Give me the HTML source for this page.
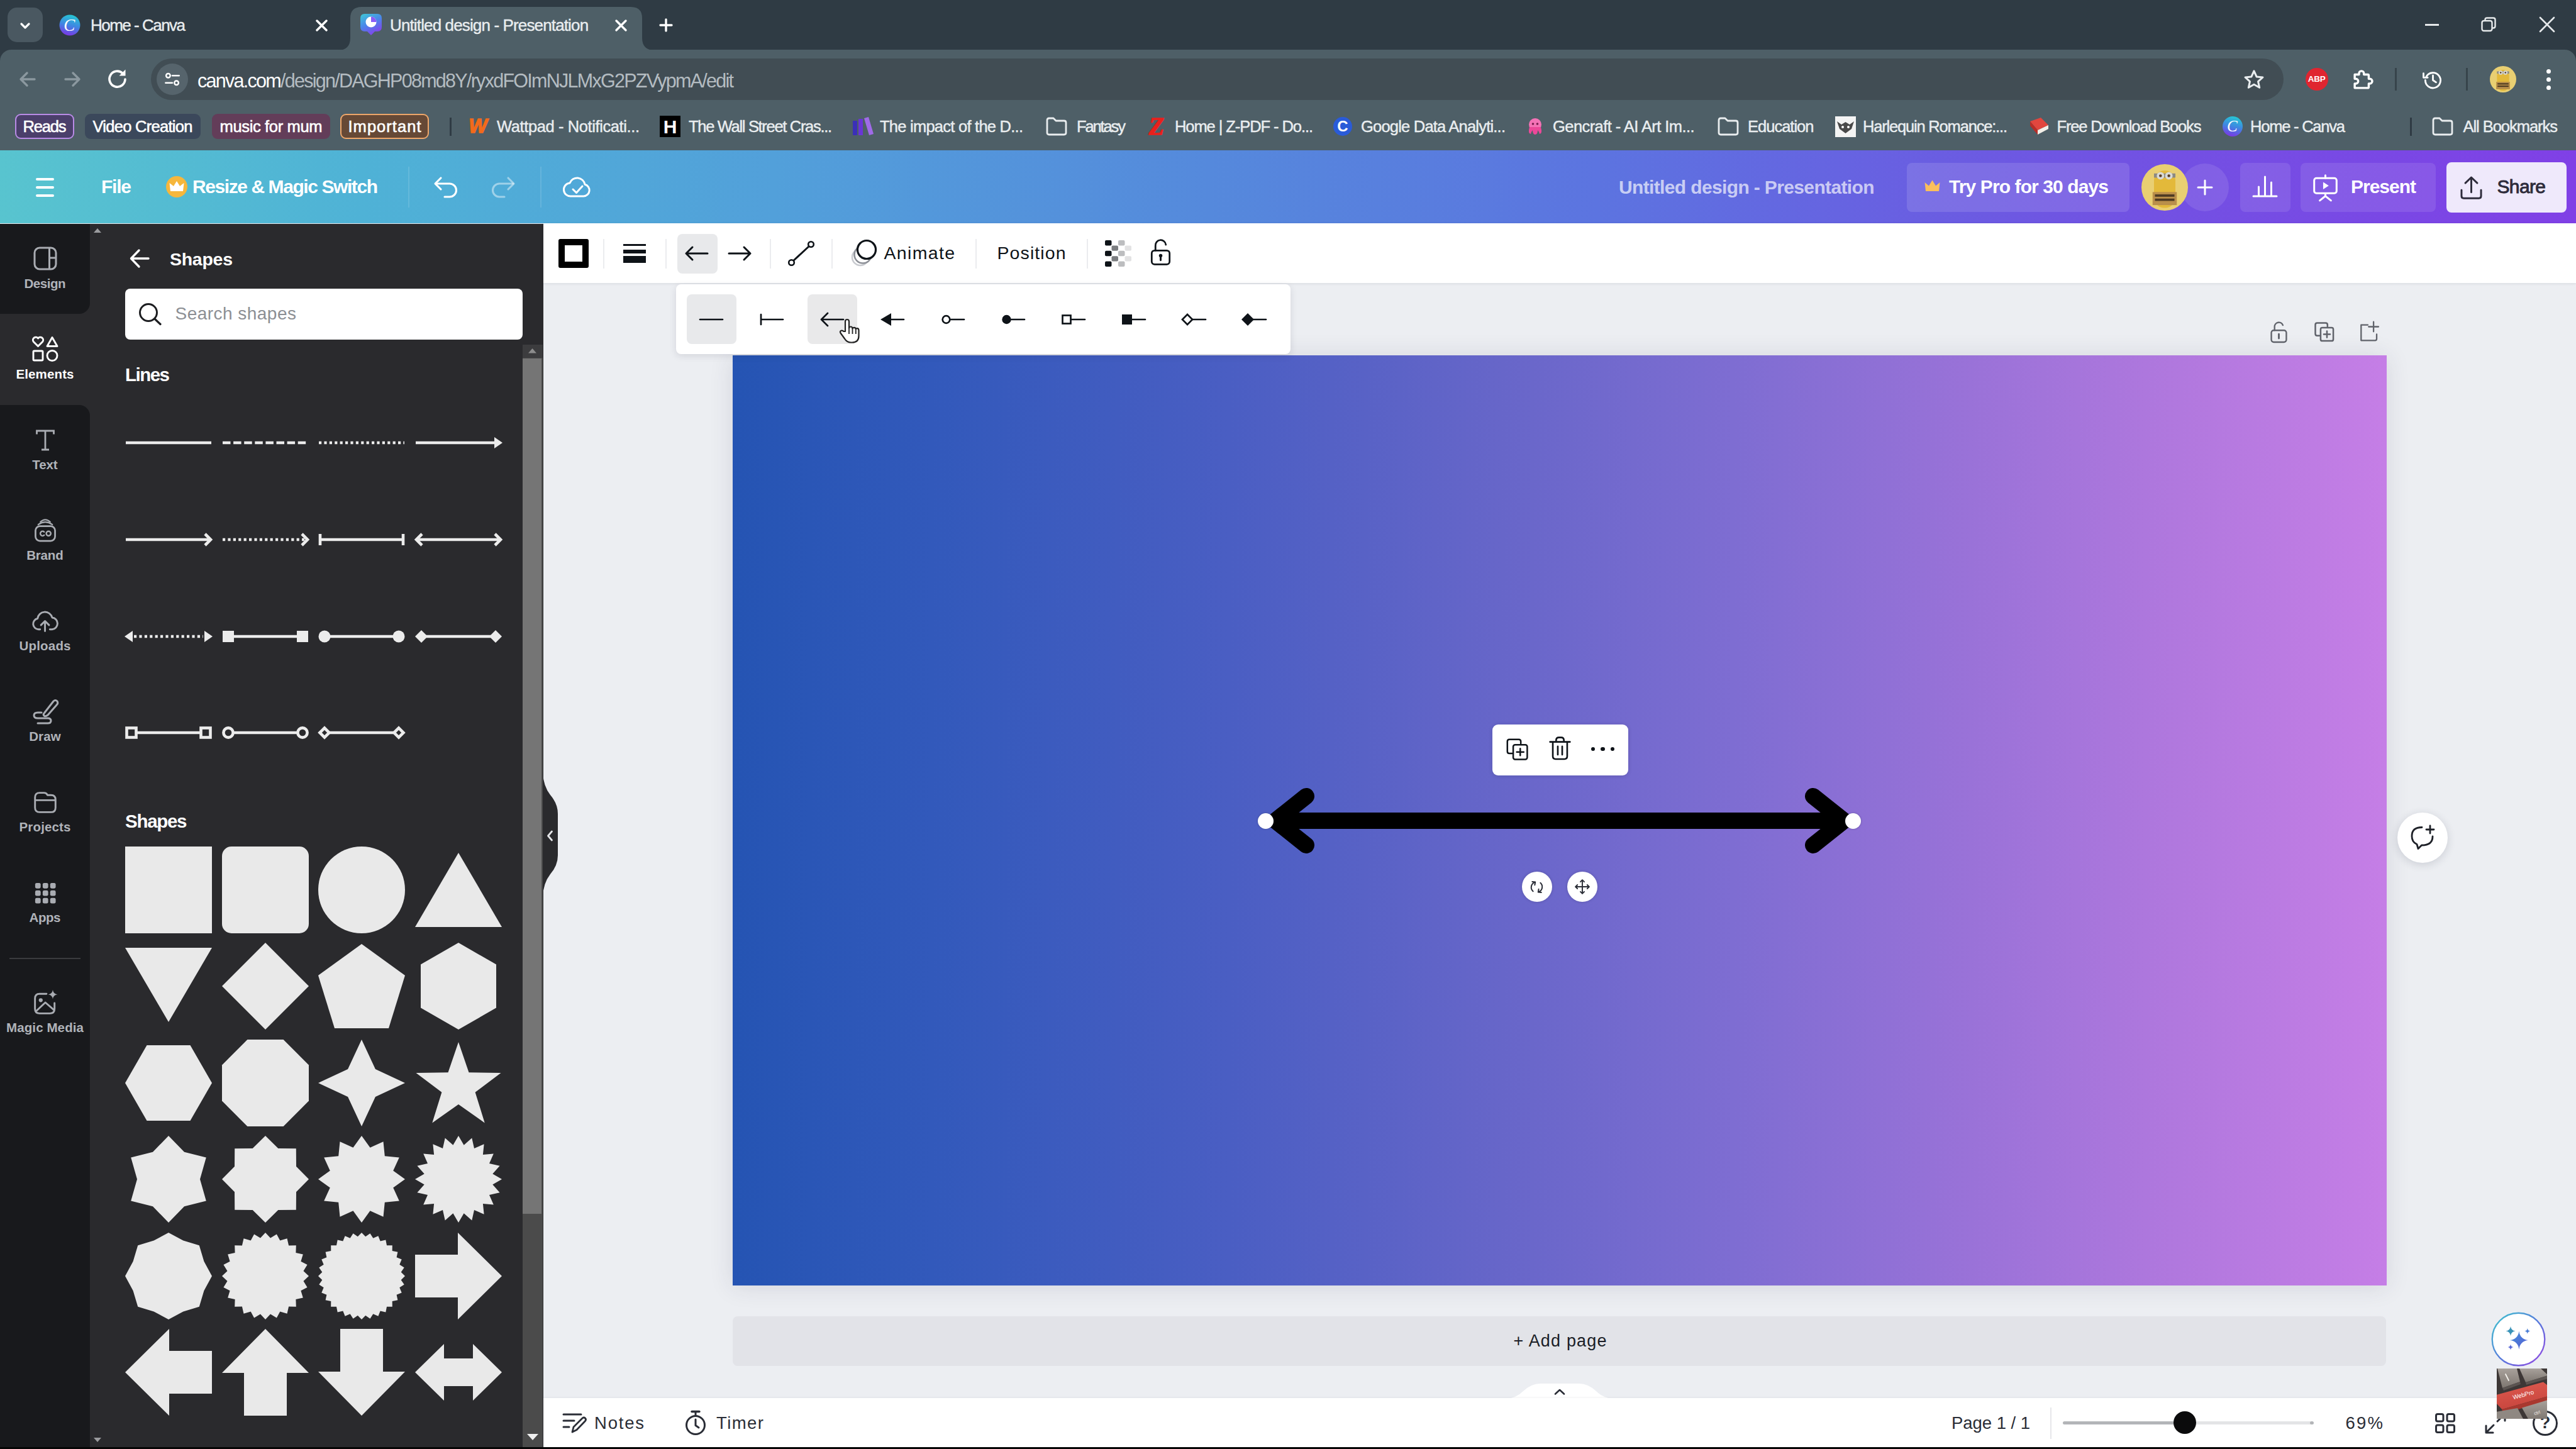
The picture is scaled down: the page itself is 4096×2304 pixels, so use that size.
<!DOCTYPE html>
<html lang="en"><head><meta charset="utf-8"><title>Untitled design - Presentation</title>
<style>
html,body{margin:0;padding:0;}
body{width:4096px;height:2304px;overflow:hidden;position:relative;background:#eceef2;font-family:"Liberation Sans",sans-serif;}
.b{position:absolute;display:block;box-sizing:border-box;}
.t{position:absolute;white-space:nowrap;}
svg{overflow:visible;}
</style></head>
<body>
<div class="b" style="left:0px;top:0px;width:4096px;height:110px;background:#2f3b44;"></div>
<div class="b" style="left:0px;top:78.5px;width:4096px;height:161.5px;background:#4e5f67;border-radius:18px 18px 0 0;"></div>
<div class="b" style="left:12px;top:12px;width:56px;height:55px;background:#4a5861;border-radius:15px;"></div>
<svg class="b" style="left:28.0px;top:29.0px;" width="24" height="24" viewBox="0 0 24 24"><path d="M6 9l6 6 6-6" fill="none" stroke="#fff" stroke-width="3.2" stroke-linecap="round" stroke-linejoin="round"/></svg>
<svg class="b" style="left:94px;top:23px;" width="34" height="34" viewBox="0 0 34 34"><defs><linearGradient id="cg" x1="0.35" y1="1" x2="0.6" y2="0"><stop offset="0" stop-color="#7d35e6"/><stop offset=".5" stop-color="#3f86e2"/><stop offset="1" stop-color="#25c8d4"/></linearGradient></defs><circle cx="17" cy="17" r="16.5" fill="url(#cg)"/></svg>
<div class="t " style="left:101.2px;top:23.8px;font-size:27px;line-height:32.4px;color:#fff;font-family:'Liberation Serif',serif;font-style:italic;">C</div>
<div class="t " style="left:144.0px;top:24.9px;font-size:26px;line-height:31.2px;color:#e9edef;letter-spacing:-1.507px;-webkit-text-stroke:0.4px #e9edef;">Home - Canva</div>
<svg class="b" style="left:503.5px;top:32.5px;" width="15.0" height="15.0" viewBox="0 0 15.0 15.0"><path d="M0 0L15.0 15.0M15.0 0L0 15.0" stroke="#fff" stroke-width="3.4" stroke-linecap="round"/></svg>
<svg class="b" style="left:537px;top:11px" width="504" height="69" viewBox="0 0 504 69"><path d="M0 69 Q20 69 20 49 V18 Q20 0 38 0 H466 Q484 0 484 18 V49 Q484 69 504 69 Z" fill="#4e5f67"/></svg>
<svg class="b" style="left:572px;top:21px;" width="36" height="36" viewBox="0 0 36 36"><defs><linearGradient id="pg" x1="0.2" y1="0" x2="0.7" y2="1"><stop offset="0" stop-color="#3fc0d8"/><stop offset=".45" stop-color="#4a86ea"/><stop offset="1" stop-color="#8a3cec"/></linearGradient></defs><path d="M8 1H28Q35 1 35 8V22Q35 29 28 29H24L18 35L12 29H8Q1 29 1 22V8Q1 1 8 1Z" fill="url(#pg)"/><circle cx="18" cy="14" r="8.5" fill="#fff"/><path d="M18 14V5.5A8.5 8.5 0 0 1 26.5 14Z" fill="#8b5cf6"/></svg>
<div class="t " style="left:620.0px;top:24.9px;font-size:26px;line-height:31.2px;color:#e9edef;letter-spacing:-0.862px;-webkit-text-stroke:0.4px #e9edef;">Untitled design - Presentation</div>
<svg class="b" style="left:979.5px;top:32.5px;" width="15.0" height="15.0" viewBox="0 0 15.0 15.0"><path d="M0 0L15.0 15.0M15.0 0L0 15.0" stroke="#fff" stroke-width="3.4" stroke-linecap="round"/></svg>
<svg class="b" style="left:1049px;top:30px;" width="20" height="20" viewBox="0 0 20 20"><path d="M10 1V19M1 10H19" stroke="#fff" stroke-width="3.4" stroke-linecap="round"/></svg>
<div class="b" style="left:3856px;top:38px;width:22px;height:2.5px;background:#e6e9eb;"></div>
<svg class="b" style="left:3945px;top:27px;" width="24" height="24" viewBox="0 0 24 24"><rect x="1.5" y="6" width="16" height="16" rx="3" fill="none" stroke="#e6e9eb" stroke-width="2.4"/><path d="M6.5 6V4.5Q6.5 1.5 9.5 1.5H19.5Q22.5 1.5 22.5 4.5V14.5Q22.5 17.5 19.5 17.5H17.5" fill="none" stroke="#e6e9eb" stroke-width="2.4"/></svg>
<svg class="b" style="left:4039px;top:28px;" width="22" height="22" viewBox="0 0 22 22"><path d="M0 0L22 22M22 0L0 22" stroke="#e6e9eb" stroke-width="2.6" stroke-linecap="round"/></svg>
<svg class="b" style="left:28px;top:110px;" width="32" height="32" viewBox="0 0 32 32"><g transform="translate(16 16) scale(1 1)"><path d="M11 0H-10M-1 -10L-11 0L-1 10" fill="none" stroke="#8b989f" stroke-width="3.4" stroke-linecap="round" stroke-linejoin="round"/></g></svg>
<svg class="b" style="left:99px;top:110px;" width="32" height="32" viewBox="0 0 32 32"><g transform="translate(16 16) scale(-1 1)"><path d="M11 0H-10M-1 -10L-11 0L-1 10" fill="none" stroke="#8b989f" stroke-width="3.4" stroke-linecap="round" stroke-linejoin="round"/></g></svg>
<svg class="b" style="left:166px;top:105px;" width="42" height="42" viewBox="0 0 42 42"><path d="M33 21A12.5 12.5 0 1 1 29 11.5" fill="none" stroke="#fff" stroke-width="3.6" stroke-linecap="round"/><path d="M33.5 5.5V15.5H23.5Z" fill="#fff"/></svg>
<div class="b" style="left:240px;top:93px;width:3391px;height:66px;background:#414d54;border-radius:33px;"></div>
<div class="b" style="left:249px;top:101px;width:50px;height:50px;background:#56646c;border-radius:25px;"></div>
<svg class="b" style="left:260px;top:112px;" width="28" height="28" viewBox="0 0 34 34"><circle cx="9" cy="10" r="4" fill="none" stroke="#fff" stroke-width="3"/><path d="M17 10H30" stroke="#fff" stroke-width="3" stroke-linecap="round"/><circle cx="25" cy="24" r="4" fill="none" stroke="#fff" stroke-width="3"/><path d="M4 24H17" stroke="#fff" stroke-width="3" stroke-linecap="round"/></svg>
<div class="t" style="left:314px;top:109.7px;font-size:30.5px;line-height:36.6px;letter-spacing:-1.730px;color:#b4bcc1"><span style="color:#fff">canva.com</span>/design/DAGHP08md8Y/ryxdFOImNJLMxG2PZVypmA/edit</div>
<svg class="b" style="left:3567px;top:109px;" width="34" height="34" viewBox="0 0 40 40"><path d="M20 4.5L24.8 15.2L36.4 16.4L27.7 24.2L30.2 35.6L20 29.7L9.8 35.6L12.3 24.2L3.6 16.4L15.2 15.2Z" fill="none" stroke="#e9edef" stroke-width="3.6" stroke-linejoin="round"/></svg>
<div class="b" style="left:3666px;top:108px;width:36px;height:36px;background:#e02530;border-radius:18px;"></div>
<div class="t " style="left:3669.8px;top:118.4px;font-size:13.5px;line-height:16.2px;color:#fff;font-weight:700;letter-spacing:-0.3px;">ABP</div>
<svg class="b" style="left:3739px;top:109px;" width="36" height="36" viewBox="0 0 42 42"><path d="M6 11H14V9A4.5 4.5 0 0 1 23 9V11H30Q32 11 32 13V19H34A4.5 4.5 0 0 1 34 28H32V34Q32 36 30 36H6V28H8A4.5 4.5 0 0 0 8 19H6Z" fill="none" stroke="#fff" stroke-width="4" stroke-linejoin="round"/></svg>
<div class="b" style="left:3808px;top:108px;width:3px;height:36px;background:#37444b;"></div>
<svg class="b" style="left:3851px;top:109.5px;" width="35" height="35" viewBox="0 0 42 42"><path d="M8.5 14A14.5 14.5 0 1 1 6.5 21" fill="none" stroke="#fff" stroke-width="3.4" stroke-linecap="round"/><path d="M3 8V16H11" fill="none" stroke="#fff" stroke-width="3.4" stroke-linecap="round" stroke-linejoin="round"/><path d="M21 12V21L27 25" fill="none" stroke="#fff" stroke-width="3.4" stroke-linecap="round" stroke-linejoin="round"/></svg>
<div class="b" style="left:3920.5px;top:108px;width:3.0px;height:36px;background:#37444b;"></div>
<svg class="b" style="left:3958.5px;top:105px;" width="42" height="42" viewBox="0 0 100 100"><defs><clipPath id="av1"><circle cx="50" cy="50" r="50"/></clipPath></defs><g clip-path="url(#av1)"><rect width="100" height="100" fill="#e9cf72"/><rect x="27" y="14" width="46" height="80" rx="22" fill="#e3b93a"/><rect x="27" y="20" width="46" height="9" fill="#8c8a83"/><circle cx="41" cy="25" r="8" fill="#d9d9d4"/><circle cx="59" cy="25" r="8" fill="#d9d9d4"/><circle cx="41" cy="25" r="3" fill="#5a3d22"/><circle cx="59" cy="25" r="3" fill="#5a3d22"/><rect x="24" y="60" width="52" height="28" fill="#b98f4a"/><rect x="29" y="65" width="42" height="5" fill="#4d3a22"/><rect x="29" y="74" width="42" height="5" fill="#4d3a22"/></g></svg>
<div class="b" style="left:4048.5px;top:109.5px;width:7.0px;height:7.0px;background:#fff;border-radius:4px;"></div>
<div class="b" style="left:4048.5px;top:122.5px;width:7.0px;height:7.0px;background:#fff;border-radius:4px;"></div>
<div class="b" style="left:4048.5px;top:135.5px;width:7.0px;height:7.0px;background:#fff;border-radius:4px;"></div>
<div class="b" style="left:24px;top:181px;width:94px;height:40px;background:#4b3f6b;border-radius:9px;border:2.5px solid #b98be6;"></div>
<div class="t " style="left:36.5px;top:186.2px;font-size:25.5px;line-height:30.6px;color:#fff;letter-spacing:-1.184px;-webkit-text-stroke:0.6px #fff;">Reads</div>
<div class="b" style="left:135px;top:181px;width:184px;height:40px;background:#3b485b;border-radius:9px;"></div>
<div class="t " style="left:147.5px;top:186.2px;font-size:25.5px;line-height:30.6px;color:#fff;letter-spacing:-0.714px;-webkit-text-stroke:0.6px #fff;">Video Creation</div>
<div class="b" style="left:337px;top:181px;width:188px;height:40px;background:#633d59;border-radius:9px;"></div>
<div class="t " style="left:349.5px;top:186.2px;font-size:25.5px;line-height:30.6px;color:#fff;letter-spacing:-0.346px;-webkit-text-stroke:0.6px #fff;">music for mum</div>
<div class="b" style="left:541px;top:181px;width:141px;height:40px;background:#664936;border-radius:9px;border:2.5px solid #eda66a;"></div>
<div class="t " style="left:553.5px;top:186.2px;font-size:25.5px;line-height:30.6px;color:#fff;letter-spacing:1.037px;-webkit-text-stroke:0.6px #fff;">Important</div>
<div class="b" style="left:714.5px;top:187px;width:3.0px;height:29px;background:#2f3b44;"></div>
<div class="t " style="left:745.4px;top:182.4px;font-size:31px;line-height:37.2px;color:#f26a1b;font-weight:700;font-style:italic;-webkit-text-stroke:1.6px #f26a1b;">W</div>
<div class="t " style="left:790.0px;top:186.2px;font-size:25.5px;line-height:30.6px;color:#e9edef;letter-spacing:-0.395px;-webkit-text-stroke:0.45px #e9edef;">Wattpad - Notificati...</div>
<div class="b" style="left:1049px;top:184px;width:33px;height:34px;background:#000;"></div>
<div class="t " style="left:1054.7px;top:183.5px;font-size:30px;line-height:36.0px;color:#fff;font-weight:700;">H</div>
<div class="t " style="left:1095.0px;top:186.2px;font-size:25.5px;line-height:30.6px;color:#e9edef;letter-spacing:-1.315px;-webkit-text-stroke:0.45px #e9edef;">The Wall Street Cras...</div>
<svg class="b" style="left:1355px;top:186px;" width="34" height="30" viewBox="0 0 34 30"><path d="M1 6H8V29H1Z" fill="#3b2fb8"/><path d="M10 3H17V29H10Z" fill="#6a35d6"/><path d="M19 2L26 0L34 27L27 29Z" fill="#a06be8"/></svg>
<div class="t " style="left:1399.0px;top:186.2px;font-size:25.5px;line-height:30.6px;color:#e9edef;letter-spacing:-0.750px;-webkit-text-stroke:0.45px #e9edef;">The impact of the D...</div>
<svg class="b" style="left:1663px;top:186px;" width="34" height="30" viewBox="0 0 34 30"><path d="M2 5Q2 2 5 2H12L16 6H29Q32 6 32 9V25Q32 28 29 28H5Q2 28 2 25Z" fill="none" stroke="#e9edef" stroke-width="2.8" stroke-linejoin="round"/></svg>
<div class="t " style="left:1712.0px;top:186.2px;font-size:25.5px;line-height:30.6px;color:#e9edef;letter-spacing:-2.120px;-webkit-text-stroke:0.45px #e9edef;">Fantasy</div>
<div class="t " style="left:1826.8px;top:177.0px;font-size:40px;line-height:48.0px;color:#e8201c;font-weight:700;font-style:italic;font-family:'Liberation Serif',serif;-webkit-text-stroke:1.5px #e8201c;">Z</div>
<div class="t " style="left:1868.0px;top:186.2px;font-size:25.5px;line-height:30.6px;color:#e9edef;letter-spacing:-1.072px;-webkit-text-stroke:0.45px #e9edef;">Home | Z-PDF - Do...</div>
<div class="b" style="left:2120px;top:186px;width:30px;height:30px;background:#2a5bd8;border-radius:15px;"></div>
<div class="t " style="left:2126.3px;top:186.6px;font-size:24px;line-height:28.8px;color:#fff;font-weight:700;">C</div>
<div class="t " style="left:2164.0px;top:186.2px;font-size:25.5px;line-height:30.6px;color:#e9edef;letter-spacing:-0.794px;-webkit-text-stroke:0.45px #e9edef;">Google Data Analyti...</div>
<svg class="b" style="left:2426px;top:186px;" width="30" height="30" viewBox="0 0 30 30"><circle cx="15" cy="12" r="10" fill="#f472b6"/><path d="M6 16Q3 27 8 27Q9 23 11 21Q11 28 15 28Q19 28 19 21Q21 23 22 27Q27 27 24 16Z" fill="#ec4899"/><circle cx="11.5" cy="11" r="1.8" fill="#7a1d4e"/><circle cx="18.5" cy="11" r="1.8" fill="#7a1d4e"/></svg>
<div class="t " style="left:2469.0px;top:186.2px;font-size:25.5px;line-height:30.6px;color:#e9edef;letter-spacing:-0.567px;-webkit-text-stroke:0.45px #e9edef;">Gencraft - AI Art Im...</div>
<svg class="b" style="left:2731px;top:186px;" width="34" height="30" viewBox="0 0 34 30"><path d="M2 5Q2 2 5 2H12L16 6H29Q32 6 32 9V25Q32 28 29 28H5Q2 28 2 25Z" fill="none" stroke="#e9edef" stroke-width="2.8" stroke-linejoin="round"/></svg>
<div class="t " style="left:2779.0px;top:186.2px;font-size:25.5px;line-height:30.6px;color:#e9edef;letter-spacing:-0.994px;-webkit-text-stroke:0.45px #e9edef;">Education</div>
<div class="b" style="left:2918px;top:185px;width:33px;height:33px;background:#f4f4f4;"></div>
<svg class="b" style="left:2918px;top:185px;" width="33" height="33" viewBox="0 0 33 33"><path d="M3 8L10 13L16.5 9L23 13L30 8L26 20L16.5 27L7 20Z" fill="#4a4a4a"/><circle cx="12" cy="17" r="2" fill="#fff"/><circle cx="21" cy="17" r="2" fill="#fff"/></svg>
<div class="t " style="left:2962.0px;top:186.2px;font-size:25.5px;line-height:30.6px;color:#e9edef;letter-spacing:-1.187px;-webkit-text-stroke:0.45px #e9edef;">Harlequin Romance:...</div>
<svg class="b" style="left:3225px;top:185px;" width="34" height="34" viewBox="0 0 34 34"><path d="M3 8L20 2L32 14L15 22Z" fill="#e2463e"/><path d="M3 8L15 22V29L3 15Z" fill="#b92d27"/><path d="M15 22L32 14V20L15 29Z" fill="#f3efe8"/></svg>
<div class="t " style="left:3270.5px;top:186.2px;font-size:25.5px;line-height:30.6px;color:#e9edef;letter-spacing:-1.163px;-webkit-text-stroke:0.45px #e9edef;">Free Download Books</div>
<svg class="b" style="left:3534px;top:185px;" width="32" height="32" viewBox="0 0 32 32"><circle cx="16" cy="16" r="16" fill="url(#cg)"/></svg>
<div class="t " style="left:3541.0px;top:186.0px;font-size:25px;line-height:30.0px;color:#fff;font-family:'Liberation Serif',serif;font-style:italic;">C</div>
<div class="t " style="left:3578.0px;top:186.2px;font-size:25.5px;line-height:30.6px;color:#e9edef;letter-spacing:-1.219px;-webkit-text-stroke:0.45px #e9edef;">Home - Canva</div>
<div class="b" style="left:3831.5px;top:187px;width:3.0px;height:29px;background:#2f3b44;"></div>
<svg class="b" style="left:3867px;top:186px;" width="34" height="30" viewBox="0 0 34 30"><path d="M2 5Q2 2 5 2H12L16 6H29Q32 6 32 9V25Q32 28 29 28H5Q2 28 2 25Z" fill="none" stroke="#e9edef" stroke-width="2.8" stroke-linejoin="round"/></svg>
<div class="t " style="left:3916.5px;top:186.2px;font-size:25.5px;line-height:30.6px;color:#e9edef;letter-spacing:-1.040px;-webkit-text-stroke:0.45px #e9edef;">All Bookmarks</div>
<div class="b" style="left:0px;top:238.5px;width:4096px;height:116.69999999999999px;background:linear-gradient(90deg,#58c4cf 0%,#4fb2d6 14%,#52a0da 30%,#5589dc 47%,#5c74e0 62%,#6f55e2 80%,#8040e6 100%);"></div>
<div class="b" style="left:57px;top:283.4px;width:29px;height:3.2000000000000455px;background:#fff;border-radius:2px;"></div>
<div class="b" style="left:57px;top:296.4px;width:29px;height:3.2000000000000455px;background:#fff;border-radius:2px;"></div>
<div class="b" style="left:57px;top:309.4px;width:29px;height:3.2000000000000455px;background:#fff;border-radius:2px;"></div>
<div class="t " style="left:161.0px;top:279.0px;font-size:30px;line-height:36.0px;color:#fff;font-weight:700;letter-spacing:-1.224px;">File</div>
<div class="b" style="left:264px;top:280px;width:34px;height:34px;background:#f6b73c;border-radius:17px;"></div>
<svg class="b" style="left:268px;top:285px;" width="26" height="22" viewBox="0 0 26 22"><path d="M3 19L1.5 6L8 11L13 3L18 11L24.5 6L23 19Z" fill="#fff"/></svg>
<div class="t " style="left:306.0px;top:279.0px;font-size:30px;line-height:36.0px;color:#fff;font-weight:700;letter-spacing:-1.420px;">Resize &amp; Magic Switch</div>
<div class="b" style="left:649px;top:265px;width:2px;height:65px;background:rgba(255,255,255,.12);"></div>
<svg class="b" style="left:687px;top:275px;" width="44" height="44" viewBox="0 0 44 44"><g transform="translate(22 22) scale(1 1)"><path d="M-8 -14L-17 -5L-8 4" fill="none" stroke="#fff" stroke-width="3.1" stroke-linecap="round" stroke-linejoin="round"/><path d="M-16 -5H6A10.5 10.5 0 0 1 6 16H-2" fill="none" stroke="#fff" stroke-width="3.1" stroke-linecap="round"/></g></svg>
<svg class="b" style="left:778px;top:275px;" width="44" height="44" viewBox="0 0 44 44"><g transform="translate(22 22) scale(-1 1)"><path d="M-8 -14L-17 -5L-8 4" fill="none" stroke="rgba(255,255,255,.45)" stroke-width="3.1" stroke-linecap="round" stroke-linejoin="round"/><path d="M-16 -5H6A10.5 10.5 0 0 1 6 16H-2" fill="none" stroke="rgba(255,255,255,.45)" stroke-width="3.1" stroke-linecap="round"/></g></svg>
<div class="b" style="left:859px;top:265px;width:2px;height:65px;background:rgba(255,255,255,.12);"></div>
<svg class="b" style="left:895px;top:274px;" width="46" height="46" viewBox="0 0 46 46"><path d="M13 38H33A9.5 9.5 0 0 0 35 19.3A12.5 12.5 0 0 0 11 17A10.5 10.5 0 0 0 13 38Z" fill="none" stroke="#fff" stroke-width="3" stroke-linejoin="round"/><path d="M16 27L21.5 32.5L31 22" fill="none" stroke="#fff" stroke-width="3" stroke-linecap="round" stroke-linejoin="round"/></svg>
<div class="t " style="left:2574.0px;top:280.0px;font-size:30px;line-height:36.0px;color:rgba(255,255,255,.68);font-weight:700;letter-spacing:-0.638px;">Untitled design - Presentation</div>
<div class="b" style="left:3031.5px;top:258.5px;width:354.0px;height:78.0px;background:rgba(255,255,255,.12);border-radius:8px;"></div>
<svg class="b" style="left:3059px;top:284px;" width="27" height="24" viewBox="0 0 27 24"><path d="M3 20L1.5 6L8 11.5L13.5 2.5L19 11.5L25.5 6L24 20Z" fill="#fbbf5c"/></svg>
<div class="t " style="left:3099.0px;top:279.0px;font-size:30px;line-height:36.0px;color:#fff;font-weight:700;letter-spacing:-0.895px;">Try Pro for 30 days</div>
<div class="b" style="left:3468px;top:260px;width:76px;height:76px;background:rgba(255,255,255,.10);border-radius:38px;"></div>
<svg class="b" style="left:3404.5px;top:260.5px;" width="74" height="74" viewBox="0 0 100 100"><defs><clipPath id="av2"><circle cx="50" cy="50" r="50"/></clipPath></defs><g clip-path="url(#av2)"><rect width="100" height="100" fill="#e9cf72"/><rect x="27" y="14" width="46" height="80" rx="22" fill="#e3b93a"/><rect x="27" y="20" width="46" height="9" fill="#8c8a83"/><circle cx="41" cy="25" r="8" fill="#d9d9d4"/><circle cx="59" cy="25" r="8" fill="#d9d9d4"/><circle cx="41" cy="25" r="3" fill="#5a3d22"/><circle cx="59" cy="25" r="3" fill="#5a3d22"/><rect x="24" y="60" width="52" height="28" fill="#b98f4a"/><rect x="29" y="65" width="42" height="5" fill="#4d3a22"/><rect x="29" y="74" width="42" height="5" fill="#4d3a22"/></g></svg>
<svg class="b" style="left:3493.5px;top:285.5px;" width="24" height="24" viewBox="0 0 24 24"><path d="M12 1V23M1 12H23" stroke="#fff" stroke-width="3" stroke-linecap="round"/></svg>
<div class="b" style="left:3561.5px;top:258.5px;width:80.0px;height:78.0px;background:rgba(255,255,255,.10);border-radius:8px;"></div>
<svg class="b" style="left:3581px;top:279px;" width="41" height="35" viewBox="0 0 41 35"><path d="M2 33H39M10.5 32V18M20.5 32V2M30.5 32V11" fill="none" stroke="#fff" stroke-width="3" stroke-linecap="round"/></svg>
<div class="b" style="left:3658px;top:258.5px;width:215px;height:78.0px;background:rgba(255,255,255,.10);border-radius:8px;"></div>
<svg class="b" style="left:3676.5px;top:277px;" width="41" height="44.5" viewBox="0 0 46 50"><rect x="3" y="7" width="40" height="27" rx="4" fill="none" stroke="#fff" stroke-width="3.4"/><path d="M23 2V7M23 35V39M23 39L13 47M23 39L33 47" fill="none" stroke="#fff" stroke-width="3.4" stroke-linecap="round"/><path d="M19 14L29 20.5L19 27Z" fill="#fff"/></svg>
<div class="t " style="left:3738.0px;top:279.0px;font-size:30px;line-height:36.0px;color:#fff;font-weight:700;letter-spacing:-1.010px;">Present</div>
<div class="b" style="left:3889.5px;top:257.5px;width:191.0px;height:80.0px;background:#efe9fb;border-radius:8px;"></div>
<svg class="b" style="left:3910.5px;top:279px;" width="37" height="38" viewBox="0 0 42 44"><path d="M3 27V38Q3 42 7 42H35Q39 42 39 38V27" fill="none" stroke="#2d2b3a" stroke-width="3.4" stroke-linecap="round"/><path d="M21 31V4M10 14L21 3.5L32 14" fill="none" stroke="#2d2b3a" stroke-width="3.4" stroke-linecap="round" stroke-linejoin="round"/></svg>
<div class="t " style="left:3970.5px;top:279.0px;font-size:30px;line-height:36.0px;color:#2d2b3a;letter-spacing:-0.641px;-webkit-text-stroke:0.9px #2d2b3a;">Share</div>
<div class="b" style="left:0px;top:355.5px;width:864px;height:1945.5px;background:#2a2a2d;"></div>
<div class="b" style="left:0px;top:355.5px;width:143px;height:143.0px;background:#18191c;border-radius:0 0 17px 0;"></div>
<div class="b" style="left:0px;top:643.5px;width:143px;height:1657.5px;background:#18191c;border-radius:0 17px 0 0;"></div>
<svg class="b" style="left:52.5px;top:392px;" width="38" height="38" viewBox="0 0 38 38"><rect x="2" y="2" width="34" height="34" rx="8" fill="none" stroke="#a9acb2" stroke-width="3"/><path d="M25.5 2V36M25.5 18H36" stroke="#a9acb2" stroke-width="3"/></svg>
<div class="t " style="left:38.5px;top:438.7px;font-size:20.5px;line-height:24.6px;color:#b0b3b9;font-weight:700;letter-spacing:-0.469px;">Design</div>
<svg class="b" style="left:50px;top:533px;" width="44" height="44" viewBox="0 0 44 44"><path d="M10.5 17.5L3.2 10.2A4.3 4.3 0 0 1 10.5 5A4.3 4.3 0 0 1 17.8 10.2Z" fill="none" stroke="#fff" stroke-width="2.9" stroke-linejoin="round"/><path d="M33 3.5L41 17.5H25Z" fill="none" stroke="#fff" stroke-width="2.9" stroke-linejoin="round"/><rect x="3" y="25" width="15" height="15" rx="1.5" fill="none" stroke="#fff" stroke-width="2.9"/><circle cx="33" cy="32.5" r="8" fill="none" stroke="#fff" stroke-width="2.9"/></svg>
<div class="t " style="left:25.5px;top:582.7px;font-size:20.5px;line-height:24.6px;color:#fff;font-weight:700;letter-spacing:0.118px;">Elements</div>
<svg class="b" style="left:56px;top:682px;" width="32" height="36" viewBox="0 0 32 36"><path d="M2.5 8.5V3H29.5V8.5M16 3V33M10 33H22" fill="none" stroke="#a9acb2" stroke-width="2.8" stroke-linejoin="miter"/></svg>
<div class="t " style="left:51.2px;top:726.7px;font-size:20.5px;line-height:24.6px;color:#b0b3b9;font-weight:700;letter-spacing:-0.047px;">Text</div>
<svg class="b" style="left:52.5px;top:821.5px;" width="38" height="41.5" viewBox="0 0 44 48"><path d="M13 9Q22 1 31 9" fill="none" stroke="#a9acb2" stroke-width="2.6" stroke-linecap="round"/><path d="M9 14Q22 5 35 14" fill="none" stroke="#a9acb2" stroke-width="2.6" stroke-linecap="round"/><rect x="4" y="17" width="36" height="27" rx="8" fill="none" stroke="#a9acb2" stroke-width="3.2"/><path d="M20 27.5A4.2 4.2 0 1 0 20 33.5" fill="none" stroke="#a9acb2" stroke-width="2.8" stroke-linecap="round"/><circle cx="28" cy="30.5" r="4.2" fill="none" stroke="#a9acb2" stroke-width="2.8"/></svg>
<div class="t " style="left:42.2px;top:870.7px;font-size:20.5px;line-height:24.6px;color:#b0b3b9;font-weight:700;letter-spacing:-0.180px;">Brand</div>
<svg class="b" style="left:50.5px;top:966px;" width="42" height="42" viewBox="0 0 46 46"><path d="M14 38H11A9.5 9.5 0 0 1 9.5 19.2A13 13 0 0 1 35 17.5A10.3 10.3 0 0 1 35 38H31" fill="none" stroke="#a9acb2" stroke-width="3.2" stroke-linecap="round" stroke-linejoin="round"/><path d="M22.5 41V24M15.5 30.5L22.5 23.5L29.5 30.5" fill="none" stroke="#a9acb2" stroke-width="3.2" stroke-linecap="round" stroke-linejoin="round"/><path d="M14 38Q22.5 44 31 38" fill="none" stroke="#a9acb2" stroke-width="0"/></svg>
<div class="t " style="left:30.5px;top:1014.7px;font-size:20.5px;line-height:24.6px;color:#b0b3b9;font-weight:700;letter-spacing:0.190px;">Uploads</div>
<svg class="b" style="left:50px;top:1110px;" width="44" height="44" viewBox="0 0 44 44"><path d="M21 23L35 5Q38 2 41 5Q43 8 40 11L26 27Q22 30 20 28Q18 26 21 23Z" fill="none" stroke="#a9acb2" stroke-width="3" stroke-linejoin="round"/><path d="M16 23H10Q4 23 4 27.5Q4 32 10 32H26Q31 32 31 36Q31 40 26 40H10" fill="none" stroke="#a9acb2" stroke-width="3" stroke-linecap="round"/></svg>
<div class="t " style="left:46.2px;top:1158.7px;font-size:20.5px;line-height:24.6px;color:#b0b3b9;font-weight:700;letter-spacing:0.120px;">Draw</div>
<svg class="b" style="left:53px;top:1256.5px;" width="38" height="38" viewBox="0 0 42 42"><path d="M3 12Q3 4 11 4H19Q23 4 25 8H31Q39 8 39 16V30Q39 38 31 38H11Q3 38 3 30Z" fill="none" stroke="#a9acb2" stroke-width="3.2" stroke-linejoin="round"/><path d="M3 17H39" stroke="#a9acb2" stroke-width="3.2"/></svg>
<div class="t " style="left:30.5px;top:1302.7px;font-size:20.5px;line-height:24.6px;color:#b0b3b9;font-weight:700;letter-spacing:0.154px;">Projects</div>
<svg class="b" style="left:55px;top:1403px;" width="34" height="34" viewBox="0 0 37 37"><rect x="1" y="1" width="9.5" height="9.5" rx="2.6" fill="#a9acb2"/><rect x="14" y="1" width="9.5" height="9.5" rx="2.6" fill="#a9acb2"/><rect x="27" y="1" width="9.5" height="9.5" rx="2.6" fill="#a9acb2"/><rect x="1" y="14" width="9.5" height="9.5" rx="2.6" fill="#a9acb2"/><rect x="14" y="14" width="9.5" height="9.5" rx="2.6" fill="#a9acb2"/><rect x="27" y="14" width="9.5" height="9.5" rx="2.6" fill="#a9acb2"/><rect x="1" y="27" width="9.5" height="9.5" rx="2.6" fill="#a9acb2"/><rect x="14" y="27" width="9.5" height="9.5" rx="2.6" fill="#a9acb2"/><rect x="27" y="27" width="9.5" height="9.5" rx="2.6" fill="#a9acb2"/></svg>
<div class="t " style="left:46.5px;top:1446.7px;font-size:20.5px;line-height:24.6px;color:#b0b3b9;font-weight:700;letter-spacing:-0.411px;">Apps</div>
<div class="b" style="left:15px;top:1523px;width:113px;height:2px;background:#3a3b3e;"></div>
<svg class="b" style="left:52px;top:1573px;" width="42" height="42" viewBox="0 0 46 46"><path d="M24 8H12Q4 8 4 16V34Q4 42 12 42H30Q38 42 38 34V24" fill="none" stroke="#a9acb2" stroke-width="3.2" stroke-linecap="round"/><circle cx="14" cy="19" r="3.4" fill="#a9acb2"/><path d="M6 38L22 23L37 36" fill="none" stroke="#a9acb2" stroke-width="3.2" stroke-linejoin="round"/><path d="M35 1Q36 8 43 9Q36 10 35 17Q34 10 27 9Q34 8 35 1Z" fill="#a9acb2"/></svg>
<div class="t " style="left:10.0px;top:1622.2px;font-size:20.5px;line-height:24.6px;color:#b0b3b9;font-weight:700;letter-spacing:0.108px;">Magic Media</div>
<svg class="b" style="left:149px;top:363px;" width="12" height="8" viewBox="0 0 12 8"><path d="M0 7L6 0L12 7Z" fill="#9a9b9e"/></svg>
<svg class="b" style="left:149px;top:2286px;" width="12" height="8" viewBox="0 0 12 8"><path d="M0 0L6 7L12 0Z" fill="#9a9b9e"/></svg>
<svg class="b" style="left:206px;top:395px;" width="32" height="32" viewBox="0 0 32 32"><path d="M30 16H3M15 3L2.5 16L15 29" fill="none" stroke="#fff" stroke-width="3.4" stroke-linecap="round" stroke-linejoin="round"/></svg>
<div class="t " style="left:270.0px;top:394.9px;font-size:28.5px;line-height:34.2px;color:#fff;font-weight:700;letter-spacing:-0.272px;">Shapes</div>
<div class="b" style="left:198.5px;top:459px;width:632.5px;height:81px;background:#fff;border-radius:8px;"></div>
<svg class="b" style="left:219px;top:480px;" width="40" height="40" viewBox="0 0 40 40"><circle cx="17" cy="17" r="13.5" fill="none" stroke="#1c1d20" stroke-width="3"/><path d="M27 27L36 35.5" stroke="#1c1d20" stroke-width="3.2" stroke-linecap="round"/></svg>
<div class="t " style="left:278.5px;top:481.7px;font-size:28px;line-height:33.6px;color:#8c8f94;letter-spacing:0.473px;">Search shapes</div>
<div class="t " style="left:199.0px;top:578.3px;font-size:29.5px;line-height:35.4px;color:#fff;font-weight:700;letter-spacing:-1.512px;">Lines</div>
<div class="t " style="left:199.0px;top:1287.8px;font-size:29.5px;line-height:35.4px;color:#fff;font-weight:700;letter-spacing:-1.284px;">Shapes</div>
<div class="b" style="left:830.5px;top:548px;width:32.0px;height:1753px;background:#4b4b4b;"></div>
<div class="b" style="left:831px;top:570px;width:29.5px;height:1360px;background:#757575;"></div>
<div class="b" style="left:830.5px;top:548px;width:32.0px;height:21px;background:#3c3c3e;"></div>
<svg class="b" style="left:839.5px;top:554px;" width="13" height="7.5" viewBox="0 0 13 7.5"><path d="M0 7.500L6.5 0L13 7.500Z" fill="#8d8d8d"/></svg>
<svg class="b" style="left:838px;top:2280px;" width="18" height="10" viewBox="0 0 18 10"><path d="M0 0L9 10L18 0Z" fill="#f0f0f0"/></svg>
<svg class="b" style="left:199px;top:684px;" width="138" height="40" viewBox="0 0 138 40"><g fill="none" stroke="#ececec" stroke-width="4.6"><path d="M1 20H137" /></g></svg>
<svg class="b" style="left:352.5px;top:684px;" width="138" height="40" viewBox="0 0 138 40"><g fill="none" stroke="#ececec" stroke-width="4.6"><path d="M1 20H137" stroke-dasharray="12.5 4.6"/></g></svg>
<svg class="b" style="left:506px;top:684px;" width="138" height="40" viewBox="0 0 138 40"><g fill="none" stroke="#ececec" stroke-width="4.6"><path d="M1 20H137" stroke-dasharray="4.2 4.2"/></g></svg>
<svg class="b" style="left:659.5px;top:684px;" width="138" height="40" viewBox="0 0 138 40"><g fill="none" stroke="#ececec" stroke-width="4.6"><path d="M1 20H128" /><path d="M139 20L126 11V29Z" fill="#ececec" stroke="none"/></g></svg>
<svg class="b" style="left:199px;top:837.5px;" width="138" height="40" viewBox="0 0 138 40"><g fill="none" stroke="#ececec" stroke-width="4.6"><path d="M1 20H135" /><path d="M127 11L136 20L127 29" stroke-linejoin="miter" stroke-linecap="butt"/></g></svg>
<svg class="b" style="left:352.5px;top:837.5px;" width="138" height="40" viewBox="0 0 138 40"><g fill="none" stroke="#ececec" stroke-width="4.6"><path d="M1 20H132" stroke-dasharray="4.2 4.2"/><path d="M127 11L136 20L127 29" stroke-linejoin="miter" stroke-linecap="butt"/></g></svg>
<svg class="b" style="left:506px;top:837.5px;" width="138" height="40" viewBox="0 0 138 40"><g fill="none" stroke="#ececec" stroke-width="4.6"><path d="M1 20H137" /><path d="M3 11V29M135 11V29"/></g></svg>
<svg class="b" style="left:659.5px;top:837.5px;" width="138" height="40" viewBox="0 0 138 40"><g fill="none" stroke="#ececec" stroke-width="4.6"><path d="M3 20H135" /><path d="M127 11L136 20L127 29" stroke-linejoin="miter" stroke-linecap="butt"/><path d="M11 11L2 20L11 29" stroke-linejoin="miter" stroke-linecap="butt"/></g></svg>
<svg class="b" style="left:199px;top:991.5px;" width="138" height="40" viewBox="0 0 138 40"><g fill="none" stroke="#ececec" stroke-width="4.6"><path d="M14 20H124" stroke-dasharray="4.2 4.2"/><path d="M139 20L126 11V29Z" fill="#ececec" stroke="none"/><path d="M-1 20L12 11V29Z" fill="#ececec" stroke="none"/></g></svg>
<svg class="b" style="left:352.5px;top:991.5px;" width="138" height="40" viewBox="0 0 138 40"><g fill="none" stroke="#ececec" stroke-width="4.6"><path d="M10 20H128" /><rect x="1" y="11" width="18" height="18" fill="#ececec" stroke="none"/><rect x="119" y="11" width="18" height="18" fill="#ececec" stroke="none"/></g></svg>
<svg class="b" style="left:506px;top:991.5px;" width="138" height="40" viewBox="0 0 138 40"><g fill="none" stroke="#ececec" stroke-width="4.6"><path d="M10 20H128" /><circle cx="10" cy="20" r="9.5" fill="#ececec" stroke="none"/><circle cx="128" cy="20" r="9.5" fill="#ececec" stroke="none"/></g></svg>
<svg class="b" style="left:659.5px;top:991.5px;" width="138" height="40" viewBox="0 0 138 40"><g fill="none" stroke="#ececec" stroke-width="4.6"><path d="M10 20H128" /><path d="M0 20L10 10L20 20L10 30Z" fill="#ececec" stroke="none"/><path d="M118 20L128 10L138 20L128 30Z" fill="#ececec" stroke="none"/></g></svg>
<svg class="b" style="left:199px;top:1145px;" width="138" height="40" viewBox="0 0 138 40"><g fill="none" stroke="#ececec" stroke-width="4.6"><path d="M17 20H121" /><rect x="2.5" y="12.5" width="15" height="15"/><rect x="120.5" y="12.5" width="15" height="15"/></g></svg>
<svg class="b" style="left:352.5px;top:1145px;" width="138" height="40" viewBox="0 0 138 40"><g fill="none" stroke="#ececec" stroke-width="4.6"><path d="M18 20H120" /><circle cx="10" cy="20" r="7.6"/><circle cx="128" cy="20" r="7.6"/></g></svg>
<svg class="b" style="left:506px;top:1145px;" width="138" height="40" viewBox="0 0 138 40"><g fill="none" stroke="#ececec" stroke-width="4.6"><path d="M17 20H121" /><path d="M2.5 20L10 12.5L17.5 20L10 27.5Z"/><path d="M120.5 20L128 12.5L135.5 20L128 27.5Z"/></g></svg>
<svg class="b" style="left:199px;top:1345.5px;" width="138" height="138" viewBox="0 0 138 138"><rect width="138" height="138" fill="#e9e9e9"/></svg>
<svg class="b" style="left:352.5px;top:1345.5px;" width="138" height="138" viewBox="0 0 138 138"><rect width="138" height="138" rx="15" fill="#e9e9e9"/></svg>
<svg class="b" style="left:506px;top:1345.5px;" width="138" height="138" viewBox="0 0 138 138"><circle cx="69" cy="69" r="69" fill="#e9e9e9"/></svg>
<svg class="b" style="left:659.5px;top:1345.5px;" width="138" height="138" viewBox="0 0 138 138"><polygon points="69.0,10.0 138.0,128.0 0.0,128.0" fill="#e9e9e9"/></svg>
<svg class="b" style="left:199px;top:1499.0px;" width="138" height="138" viewBox="0 0 138 138"><polygon points="0.0,8.0 138.0,8.0 69.0,126.0" fill="#e9e9e9"/></svg>
<svg class="b" style="left:352.5px;top:1499.0px;" width="138" height="138" viewBox="0 0 138 138"><polygon points="69.0,0.0 138.0,69.0 69.0,138.0 0.0,69.0" fill="#e9e9e9"/></svg>
<svg class="b" style="left:506px;top:1499.0px;" width="138" height="138" viewBox="0 0 138 138"><polygon points="69.0,2.0 138.0,52.0 112.0,136.0 26.0,136.0 0.0,52.0" fill="#e9e9e9"/></svg>
<svg class="b" style="left:659.5px;top:1499.0px;" width="138" height="138" viewBox="0 0 138 138"><polygon points="69.0,0.0 129.0,34.5 129.0,103.5 69.0,138.0 9.0,103.5 9.0,34.5" fill="#e9e9e9"/></svg>
<svg class="b" style="left:199px;top:1652.5px;" width="138" height="138" viewBox="0 0 138 138"><polygon points="0.0,69.0 34.5,9.0 103.5,9.0 138.0,69.0 103.5,129.0 34.5,129.0" fill="#e9e9e9"/></svg>
<svg class="b" style="left:352.5px;top:1652.5px;" width="138" height="138" viewBox="0 0 138 138"><polygon points="40.4,0.0 97.6,0.0 138.0,40.4 138.0,97.6 97.6,138.0 40.4,138.0 0.0,97.6 0.0,40.4" fill="#e9e9e9"/></svg>
<svg class="b" style="left:506px;top:1652.5px;" width="138" height="138" viewBox="0 0 138 138"><polygon points="69.0,0.0 90.9,47.1 138.0,69.0 90.9,90.9 69.0,138.0 47.1,90.9 0.0,69.0 47.1,47.1" fill="#e9e9e9"/></svg>
<svg class="b" style="left:659.5px;top:1652.5px;" width="138" height="138" viewBox="0 0 138 138"><polygon points="69.0,4.0 85.5,52.3 136.5,53.1 95.6,83.7 110.7,132.4 69.0,103.0 27.3,132.4 42.4,83.7 1.5,53.1 52.5,52.3" fill="#e9e9e9"/></svg>
<svg class="b" style="left:199px;top:1806.0px;" width="138" height="138" viewBox="0 0 138 138"><polygon points="69.0,0.0 94.0,25.7 128.8,34.5 119.0,69.0 128.8,103.5 94.0,112.3 69.0,138.0 44.0,112.3 9.2,103.5 19.0,69.0 9.2,34.5 44.0,25.7" fill="#e9e9e9"/></svg>
<svg class="b" style="left:352.5px;top:1806.0px;" width="138" height="138" viewBox="0 0 138 138"><polygon points="69.0,0.0 89.3,20.0 117.8,20.2 118.0,48.7 138.0,69.0 118.0,89.3 117.8,117.8 89.3,118.0 69.0,138.0 48.7,118.0 20.2,117.8 20.0,89.3 0.0,69.0 20.0,48.7 20.2,20.2 48.7,20.0" fill="#e9e9e9"/></svg>
<svg class="b" style="left:506px;top:1806.0px;" width="138" height="138" viewBox="0 0 138 138"><polygon points="69.0,0.0 82.5,18.8 103.5,9.2 105.8,32.2 128.8,34.5 119.2,55.5 138.0,69.0 119.2,82.5 128.8,103.5 105.8,105.8 103.5,128.8 82.5,119.2 69.0,138.0 55.5,119.2 34.5,128.8 32.2,105.8 9.2,103.5 18.8,82.5 0.0,69.0 18.8,55.5 9.2,34.5 32.2,32.2 34.5,9.2 55.5,18.8" fill="#e9e9e9"/></svg>
<svg class="b" style="left:659.5px;top:1806.0px;" width="138" height="138" viewBox="0 0 138 138"><polygon points="69.0,0.0 77.6,14.7 90.3,3.4 94.0,20.0 109.6,13.2 107.9,30.1 124.8,28.4 118.0,44.0 134.6,47.7 123.3,60.4 138.0,69.0 123.3,77.6 134.6,90.3 118.0,94.0 124.8,109.6 107.9,107.9 109.6,124.8 94.0,118.0 90.3,134.6 77.6,123.3 69.0,138.0 60.4,123.3 47.7,134.6 44.0,118.0 28.4,124.8 30.1,107.9 13.2,109.6 20.0,94.0 3.4,90.3 14.7,77.6 0.0,69.0 14.7,60.4 3.4,47.7 20.0,44.0 13.2,28.4 30.1,30.1 28.4,13.2 44.0,20.0 47.7,3.4 60.4,14.7" fill="#e9e9e9"/></svg>
<svg class="b" style="left:199px;top:1959.5px;" width="138" height="138" viewBox="0 0 138 138"><polygon points="69.0,0.0 92.3,12.6 117.8,20.2 125.4,45.7 138.0,69.0 125.4,92.3 117.8,117.8 92.3,125.4 69.0,138.0 45.7,125.4 20.2,117.8 12.6,92.3 0.0,69.0 12.6,45.7 20.2,20.2 45.7,12.6" fill="#e9e9e9"/></svg>
<svg class="b" style="left:352.5px;top:1959.5px;" width="138" height="138" viewBox="0 0 138 138"><polygon points="69.0,0.0 77.0,8.5 86.9,2.4 92.3,12.6 103.5,9.2 106.1,20.6 117.8,20.2 117.4,31.9 128.8,34.5 125.4,45.7 135.6,51.1 129.5,61.0 138.0,69.0 129.5,77.0 135.6,86.9 125.4,92.3 128.8,103.5 117.4,106.1 117.8,117.8 106.1,117.4 103.5,128.8 92.3,125.4 86.9,135.6 77.0,129.5 69.0,138.0 61.0,129.5 51.1,135.6 45.7,125.4 34.5,128.8 31.9,117.4 20.2,117.8 20.6,106.1 9.2,103.5 12.6,92.3 2.4,86.9 8.5,77.0 0.0,69.0 8.5,61.0 2.4,51.1 12.6,45.7 9.2,34.5 20.6,31.9 20.2,20.2 31.9,20.6 34.5,9.2 45.7,12.6 51.1,2.4 61.0,8.5" fill="#e9e9e9"/></svg>
<svg class="b" style="left:506px;top:1959.5px;" width="138" height="138" viewBox="0 0 138 138"><polygon points="69.0,0.0 75.2,6.3 82.5,1.3 87.3,8.7 95.4,5.3 98.7,13.4 107.3,11.6 109.0,20.3 117.8,20.2 117.7,29.0 126.4,30.7 124.6,39.3 132.7,42.6 129.3,50.7 136.7,55.5 131.7,62.8 138.0,69.0 131.7,75.2 136.7,82.5 129.3,87.3 132.7,95.4 124.6,98.7 126.4,107.3 117.7,109.0 117.8,117.8 109.0,117.7 107.3,126.4 98.7,124.6 95.4,132.7 87.3,129.3 82.5,136.7 75.2,131.7 69.0,138.0 62.8,131.7 55.5,136.7 50.7,129.3 42.6,132.7 39.3,124.6 30.7,126.4 29.0,117.7 20.2,117.8 20.3,109.0 11.6,107.3 13.4,98.7 5.3,95.4 8.7,87.3 1.3,82.5 6.3,75.2 0.0,69.0 6.3,62.8 1.3,55.5 8.7,50.7 5.3,42.6 13.4,39.3 11.6,30.7 20.3,29.0 20.2,20.2 29.0,20.3 30.7,11.6 39.3,13.4 42.6,5.3 50.7,8.7 55.5,1.3 62.8,6.3" fill="#e9e9e9"/></svg>
<svg class="b" style="left:659.5px;top:1959.5px;" width="138" height="138" viewBox="0 0 138 138"><polygon points="0.0,35.0 68.0,35.0 68.0,0.0 138.0,69.0 68.0,138.0 68.0,103.0 0.0,103.0" fill="#e9e9e9"/></svg>
<svg class="b" style="left:199px;top:2113.0px;" width="138" height="138" viewBox="0 0 138 138"><polygon points="138.0,35.0 70.0,35.0 70.0,0.0 0.0,69.0 70.0,138.0 70.0,103.0 138.0,103.0" fill="#e9e9e9"/></svg>
<svg class="b" style="left:352.5px;top:2113.0px;" width="138" height="138" viewBox="0 0 138 138"><polygon points="35.0,138.0 35.0,70.0 0.0,70.0 69.0,0.0 138.0,70.0 103.0,70.0 103.0,138.0" fill="#e9e9e9"/></svg>
<svg class="b" style="left:506px;top:2113.0px;" width="138" height="138" viewBox="0 0 138 138"><polygon points="35.0,0.0 35.0,68.0 0.0,68.0 69.0,138.0 138.0,68.0 103.0,68.0 103.0,0.0" fill="#e9e9e9"/></svg>
<svg class="b" style="left:659.5px;top:2113.0px;" width="138" height="138" viewBox="0 0 138 138"><polygon points="0.0,69.0 46.0,24.0 46.0,47.0 92.0,47.0 92.0,24.0 138.0,69.0 92.0,114.0 92.0,91.0 46.0,91.0 46.0,114.0" fill="#e9e9e9"/></svg>
<svg class="b" style="left:863px;top:1228px;" width="26" height="198" viewBox="0 0 26 198"><path d="M0 0Q1 22 12 36Q24 50 24 66V132Q24 148 12 162Q1 176 0 198Z" fill="#2a2a2d"/><path d="M14.5 94L8.5 101L14.5 108" fill="none" stroke="#e4e5e8" stroke-width="2.8" stroke-linecap="round" stroke-linejoin="round"/></svg>
<svg class="b" style="left:3608.5px;top:509px;" width="29" height="37.5" viewBox="0 0 34 44"><rect x="3" y="19" width="28" height="22" rx="4.5" fill="none" stroke="#60636b" stroke-width="2.8"/><path d="M9 19V12A8 8 0 0 1 24.5 9.5" fill="none" stroke="#60636b" stroke-width="2.8" stroke-linecap="round"/><path d="M17 26V34" stroke="#60636b" stroke-width="3.4" stroke-linecap="round"/></svg>
<svg class="b" style="left:3679px;top:511px;" width="33.6" height="33.6" viewBox="0 0 40 40"><path d="M11 27H6.5Q3 27 3 23.5V6.500Q3 3 6.5 3H22.500Q26 3 26 6.500V10" fill="none" stroke="#60636b" stroke-width="3" stroke-linecap="round"/><rect x="13" y="12" width="24" height="25" rx="3.2" fill="none" stroke="#60636b" stroke-width="3"/><path d="M25 18.500V30.500M19 24.500H31" stroke="#60636b" stroke-width="3" stroke-linecap="round"/></svg>
<svg class="b" style="left:3751px;top:509px;" width="33" height="35" viewBox="0 0 40 42"><path d="M17 9H4V39H31Q34 39 34 36V27" fill="none" stroke="#60636b" stroke-width="2.8" stroke-linejoin="round" stroke-linecap="round"/><path d="M28 3V22M18.5 12.500H37.5" stroke="#60636b" stroke-width="2.8" stroke-linecap="round"/></svg>
<div class="b" style="left:1165px;top:565px;width:2630px;height:1479px;background:linear-gradient(90deg,#2554b3 0%,#3259bb 12%,#4a5ec3 30%,#6766c9 46.5%,#7e6dd2 60.5%,#9a72d8 75%,#b178de 87.5%,#c57ee6 100%);box-shadow:0 2px 36px rgba(40,45,70,.12);"></div>
<div class="b" style="left:1165px;top:2092.5px;width:2629px;height:79.0px;background:#e2e3e8;border-radius:8px;"></div>
<div class="t " style="left:2406.5px;top:2115.8px;font-size:27px;line-height:32.4px;color:#1b1e27;letter-spacing:1.179px;">+ Add page</div>
<svg class="b" style="left:2395px;top:2198px;" width="170" height="26" viewBox="0 0 170 26"><path d="M0 26Q16 25 27 14Q40 2 54 2H116Q130 2 143 14Q154 25 170 26Z" fill="#fff"/><path d="M78 18.500L85 12L92 18.5" fill="none" stroke="#2a2d36" stroke-width="2.6" stroke-linecap="round" stroke-linejoin="round"/></svg>
<div class="b" style="left:864px;top:2222.5px;width:3232px;height:78.5px;background:#fff;box-shadow:0 -1px 3px rgba(30,35,60,.06);"></div>
<svg class="b" style="left:893px;top:2244px;" width="40" height="38" viewBox="0 0 40 38"><path d="M3 5H31M3 15H20M3 25H12" stroke="#2a2d36" stroke-width="3" stroke-linecap="round"/><path d="M17 33L19 25L33 11Q35.5 9 37.5 11Q39.5 13 37.5 15.500L24 29.500Z" fill="none" stroke="#2a2d36" stroke-width="2.8" stroke-linejoin="round"/></svg>
<div class="t " style="left:945.0px;top:2246.0px;font-size:27.5px;line-height:33.0px;color:#2a2d36;letter-spacing:1.789px;">Notes</div>
<svg class="b" style="left:1088px;top:2241px;" width="36" height="42" viewBox="0 0 36 42"><circle cx="18" cy="25" r="14.5" fill="none" stroke="#2a2d36" stroke-width="3"/><path d="M12 3.500H24" stroke="#2a2d36" stroke-width="3.4" stroke-linecap="round"/><path d="M18 4V10M18 16V25.500L23 29" fill="none" stroke="#2a2d36" stroke-width="3" stroke-linecap="round"/></svg>
<div class="t " style="left:1139.0px;top:2246.0px;font-size:27.5px;line-height:33.0px;color:#2a2d36;letter-spacing:1.438px;">Timer</div>
<div class="t " style="left:3103.0px;top:2246.0px;font-size:27.5px;line-height:33.0px;color:#2a2d36;letter-spacing:-0.043px;">Page 1 / 1</div>
<div class="b" style="left:3259.5px;top:2238px;width:2.0px;height:50px;background:#e6e7ea;"></div>
<div class="b" style="left:3279.5px;top:2259.5px;width:194.5px;height:5.0px;background:#b3b5b8;border-radius:3px;"></div>
<div class="b" style="left:3474px;top:2259.5px;width:203px;height:5.0px;background:#e3e4e6;border-radius:3px;"></div>
<div class="b" style="left:3673px;top:2259.5px;width:6px;height:5.0px;background:#b3b5b8;border-radius:3px;"></div>
<div class="b" style="left:3456px;top:2244px;width:36px;height:36px;background:#0b0b0c;border-radius:18px;"></div>
<div class="t " style="left:3729.5px;top:2246.0px;font-size:27.5px;line-height:33.0px;color:#2a2d36;letter-spacing:2.227px;">69%</div>
<svg class="b" style="left:3872px;top:2247px;" width="32" height="32" viewBox="0 0 32 32"><rect x="1.5" y="1.5" width="11.5" height="11.5" rx="2.5" fill="none" stroke="#2a2d36" stroke-width="3"/><rect x="19" y="1.5" width="11.5" height="11.5" rx="2.5" fill="none" stroke="#2a2d36" stroke-width="3"/><rect x="1.5" y="19" width="11.5" height="11.5" rx="2.5" fill="none" stroke="#2a2d36" stroke-width="3"/><rect x="19" y="19" width="11.5" height="11.5" rx="2.5" fill="none" stroke="#2a2d36" stroke-width="3"/></svg>
<svg class="b" style="left:3950px;top:2245px;" width="36" height="36" viewBox="0 0 36 36"><path d="M3 33L15 21M3 22V33H14" fill="none" stroke="#2a2d36" stroke-width="3" stroke-linecap="round" stroke-linejoin="round"/><path d="M33 3L21 15M22 3H33V14" fill="none" stroke="#2a2d36" stroke-width="3" stroke-linecap="round" stroke-linejoin="round"/></svg>
<div class="b" style="left:4027px;top:2242.5px;width:40px;height:40.0px;background:transparent;border-radius:20px;border:3px solid #2a2d36;"></div>
<div class="t " style="left:4038.8px;top:2246.3px;font-size:27px;line-height:32.4px;color:#2a2d36;font-weight:700;">?</div>
<div class="b" style="left:0px;top:2301px;width:4096px;height:3px;background:#050505;"></div>
<div class="b" style="left:864px;top:355px;width:3232px;height:95px;background:#fff;box-shadow:0 1px 4px rgba(30,35,60,.10);"></div>
<div class="b" style="left:888px;top:380px;width:48px;height:46px;background:#fff;border-radius:3px;border:10px solid #000;"></div>
<div class="b" style="left:959px;top:380px;width:2px;height:47px;background:#ebecef;"></div>
<div class="b" style="left:991px;top:387.5px;width:36px;height:3.0px;background:#0e1318;"></div>
<div class="b" style="left:991px;top:397px;width:36px;height:6px;background:#0e1318;"></div>
<div class="b" style="left:991px;top:407px;width:36px;height:10.5px;background:#0e1318;"></div>
<div class="b" style="left:1058px;top:380px;width:2px;height:47px;background:#ebecef;"></div>
<div class="b" style="left:1077px;top:372px;width:64px;height:63px;background:#e8e9eb;border-radius:8px;"></div>
<svg class="b" style="left:1084px;top:378.5px;" width="48" height="48" viewBox="0 0 48 48"><g transform="translate(24 24) scale(-1 1)"><path d="M-17 0H17M7 -10L17 0L7 10" fill="none" stroke="#0e1318" stroke-width="3" stroke-linecap="round" stroke-linejoin="round"/></g></svg>
<svg class="b" style="left:1152px;top:378.5px;" width="48" height="48" viewBox="0 0 48 48"><g transform="translate(24 24) scale(1 1)"><path d="M-17 0H17M7 -10L17 0L7 10" fill="none" stroke="#0e1318" stroke-width="3" stroke-linecap="round" stroke-linejoin="round"/></g></svg>
<div class="b" style="left:1224px;top:380px;width:2px;height:47px;background:#ebecef;"></div>
<svg class="b" style="left:1252px;top:382px;" width="44" height="42" viewBox="0 0 44 42"><path d="M9 33L35 9" stroke="#0e1318" stroke-width="3"/><circle cx="6.5" cy="35.5" r="4.3" fill="#fff" stroke="#0e1318" stroke-width="2.6"/><circle cx="37.5" cy="6.5" r="4.3" fill="#fff" stroke="#0e1318" stroke-width="2.6"/></svg>
<div class="b" style="left:1322px;top:380px;width:2px;height:47px;background:#ebecef;"></div>
<svg class="b" style="left:1351px;top:378px;" width="46" height="48" viewBox="0 0 46 48"><circle cx="17" cy="31" r="13" fill="none" stroke="#c9cbd0" stroke-width="2.6"/><circle cx="21" cy="27" r="13.5" fill="#fff" stroke="#8d9097" stroke-width="2.6"/><circle cx="27" cy="19" r="14.5" fill="#fff" stroke="#0e1318" stroke-width="3.2"/></svg>
<div class="t " style="left:1405.5px;top:385.4px;font-size:28.5px;line-height:34.2px;color:#0e1318;letter-spacing:1.328px;">Animate</div>
<div class="b" style="left:1550.5px;top:380px;width:2.0px;height:47px;background:#ebecef;"></div>
<div class="t " style="left:1585.5px;top:385.4px;font-size:28.5px;line-height:34.2px;color:#0e1318;letter-spacing:1.089px;">Position</div>
<div class="b" style="left:1728px;top:380px;width:2px;height:47px;background:#ebecef;"></div>
<svg class="b" style="left:1757px;top:381.5px;" width="42" height="42" viewBox="0 0 42 42"><rect x="0.0" y="0.0" width="10.5" height="8.4" rx="2" fill="#0e1318" opacity="1"/><rect x="21.0" y="0.0" width="10.5" height="8.4" rx="2" fill="#0e1318" opacity="0.28"/><rect x="10.5" y="8.4" width="10.5" height="8.4" rx="2" fill="#0e1318" opacity="0.55"/><rect x="31.5" y="8.4" width="10.5" height="8.4" rx="2" fill="#0e1318" opacity="0.12"/><rect x="0.0" y="16.8" width="10.5" height="8.4" rx="2" fill="#0e1318" opacity="1"/><rect x="21.0" y="16.8" width="10.5" height="8.4" rx="2" fill="#0e1318" opacity="0.28"/><rect x="10.5" y="25.200000000000003" width="10.5" height="8.4" rx="2" fill="#0e1318" opacity="0.55"/><rect x="31.5" y="25.200000000000003" width="10.5" height="8.4" rx="2" fill="#0e1318" opacity="0.12"/><rect x="0.0" y="33.6" width="10.5" height="8.4" rx="2" fill="#0e1318" opacity="1"/><rect x="21.0" y="33.6" width="10.5" height="8.4" rx="2" fill="#0e1318" opacity="0.28"/></svg>
<svg class="b" style="left:1828.5px;top:379px;" width="33" height="44" viewBox="0 0 36 48"><rect x="2.5" y="21" width="31" height="24" rx="5" fill="none" stroke="#0e1318" stroke-width="3"/><path d="M9 21V13A9 9 0 0 1 27 11" fill="none" stroke="#0e1318" stroke-width="3" stroke-linecap="round"/><circle cx="18" cy="30" r="3" fill="#0e1318"/><path d="M18 30V38" stroke="#0e1318" stroke-width="3.2" stroke-linecap="round"/></svg>
<div class="b" style="left:1075px;top:452px;width:977px;height:111px;background:#fff;border-radius:8px;box-shadow:0 3px 12px rgba(30,35,60,.12);"></div>
<div class="b" style="left:1092px;top:468px;width:79px;height:78.5px;background:#e8e9eb;border-radius:8px;"></div>
<div class="b" style="left:1284px;top:468px;width:79px;height:78.5px;background:#e9e9ea;border-radius:8px;"></div>
<svg class="b" style="left:1107px;top:483.5px;" width="48" height="48" viewBox="0 0 48 48"><g fill="none" stroke="#0e1318" stroke-width="2.7"><path d="M6 24H42" stroke-linecap="round"/></g></svg>
<svg class="b" style="left:1203px;top:483.5px;" width="48" height="48" viewBox="0 0 48 48"><g fill="none" stroke="#0e1318" stroke-width="2.7"><path d="M7 24H42M7 16V32" stroke-linecap="round"/></g></svg>
<svg class="b" style="left:1299px;top:483.5px;" width="48" height="48" viewBox="0 0 48 48"><g fill="none" stroke="#0e1318" stroke-width="2.7"><path d="M7 24H42M17 14L7 24L17 34" stroke-linecap="round" stroke-linejoin="round"/></g></svg>
<svg class="b" style="left:1395px;top:483.5px;" width="48" height="48" viewBox="0 0 48 48"><g fill="none" stroke="#0e1318" stroke-width="2.7"><path d="M20 24H42" stroke-linecap="round"/><path d="M5 24L22 14V34Z" fill="#0e1318" stroke="none"/></g></svg>
<svg class="b" style="left:1491px;top:483.5px;" width="48" height="48" viewBox="0 0 48 48"><g fill="none" stroke="#0e1318" stroke-width="2.7"><circle cx="13.5" cy="24" r="5.8"/><path d="M20 24H42" stroke-linecap="round"/></g></svg>
<svg class="b" style="left:1587px;top:483.5px;" width="48" height="48" viewBox="0 0 48 48"><g fill="none" stroke="#0e1318" stroke-width="2.7"><circle cx="13.5" cy="24" r="7.2" fill="#0e1318" stroke="none"/><path d="M20 24H42" stroke-linecap="round"/></g></svg>
<svg class="b" style="left:1683px;top:483.5px;" width="48" height="48" viewBox="0 0 48 48"><g fill="none" stroke="#0e1318" stroke-width="2.7"><rect x="6.5" y="17.5" width="13" height="13"/><path d="M20 24H42" stroke-linecap="round"/></g></svg>
<svg class="b" style="left:1779px;top:483.5px;" width="48" height="48" viewBox="0 0 48 48"><g fill="none" stroke="#0e1318" stroke-width="2.7"><rect x="5" y="16" width="16" height="16" fill="#0e1318" stroke="none"/><path d="M20 24H42" stroke-linecap="round"/></g></svg>
<svg class="b" style="left:1875px;top:483.5px;" width="48" height="48" viewBox="0 0 48 48"><g fill="none" stroke="#0e1318" stroke-width="2.7"><path d="M5 24L13 16L21 24L13 32Z" stroke-linejoin="miter"/><path d="M21 24H42" stroke-linecap="round"/></g></svg>
<svg class="b" style="left:1971px;top:483.5px;" width="48" height="48" viewBox="0 0 48 48"><g fill="none" stroke="#0e1318" stroke-width="2.7"><path d="M3 24L13 14L23 24L13 34Z" fill="#0e1318" stroke="none"/><path d="M21 24H42" stroke-linecap="round"/></g></svg>
<svg class="b" style="left:1333px;top:505px;" width="34" height="42" viewBox="0 0 34 42"><path d="M11 22V6.500Q11 3 14 3Q17 3 17 6.500V17Q17 14.5 19.8 14.500Q22.5 14.5 22.5 18Q22.5 15.8 25.2 15.800Q27.8 15.8 27.8 19Q27.8 17.2 30 17.200Q32.5 17.2 32.5 20.500V29Q32.5 39.5 22 39.500H20Q13.5 39.5 10 33.500L3.5 24.500Q2 22 4.5 20.800Q6.8 20 8.5 22Z" fill="#fff" stroke="#222" stroke-width="2.2" stroke-linejoin="round"/><path d="M17 17V26M22.5 18.500V26M27.8 20V26" stroke="#222" stroke-width="1.8"/></svg>
<svg class="b" style="left:1990px;top:1240px;" width="980" height="130" viewBox="0 0 980 130"><g fill="none" stroke="#000" stroke-width="26" stroke-linecap="round" stroke-linejoin="round"><path d="M40 65H940" stroke-linecap="butt"/><path d="M87 26L38 65L87 104"/><path d="M893 26L942 65L893 104"/></g></svg>
<div class="b" style="left:2000px;top:1292.5px;width:25px;height:25.0px;background:#fff;border-radius:13px;box-shadow:0 0 3px rgba(30,35,60,.35);"></div>
<div class="b" style="left:2934px;top:1292.5px;width:25px;height:25.0px;background:#fff;border-radius:13px;box-shadow:0 0 3px rgba(30,35,60,.35);"></div>
<div class="b" style="left:2372.5px;top:1151.5px;width:216.5px;height:81.0px;background:#fff;border-radius:9px;box-shadow:0 1px 6px rgba(30,35,60,.18);"></div>
<svg class="b" style="left:2394px;top:1172.5px;" width="37.2" height="37.2" viewBox="0 0 40 40"><path d="M11 27H6.5Q3 27 3 23.5V6.500Q3 3 6.5 3H22.500Q26 3 26 6.500V10" fill="none" stroke="#0e1318" stroke-width="2.7" stroke-linecap="round"/><rect x="13" y="12" width="24" height="25" rx="3.2" fill="none" stroke="#0e1318" stroke-width="2.7"/><path d="M25 18.500V30.500M19 24.500H31" stroke="#0e1318" stroke-width="2.7" stroke-linecap="round"/></svg>
<svg class="b" style="left:2461.5px;top:1170px;" width="37" height="40.5" viewBox="0 0 42 46"><path d="M3 11H39" stroke="#0e1318" stroke-width="3" stroke-linecap="round"/><path d="M14 10V8Q14 3 19 3H23Q28 3 28 8V10" fill="none" stroke="#0e1318" stroke-width="3"/><path d="M8 11V37Q8 42 13 42H29Q34 42 34 37V11" fill="none" stroke="#0e1318" stroke-width="3"/><path d="M17 19V34M25 19V34" stroke="#0e1318" stroke-width="3" stroke-linecap="round"/></svg>
<div class="b" style="left:2529.8px;top:1187.8px;width:6.399999999999636px;height:6.400000000000091px;background:#0e1318;border-radius:4px;"></div>
<div class="b" style="left:2545.3px;top:1187.8px;width:6.399999999999636px;height:6.400000000000091px;background:#0e1318;border-radius:4px;"></div>
<div class="b" style="left:2560.8px;top:1187.8px;width:6.399999999999636px;height:6.400000000000091px;background:#0e1318;border-radius:4px;"></div>
<div class="b" style="left:2419.5px;top:1386px;width:48.0px;height:48px;background:#fff;border-radius:24px;box-shadow:0 0 4px rgba(30,35,60,.25);"></div>
<div class="b" style="left:2491.5px;top:1386px;width:48.0px;height:48px;background:#fff;border-radius:24px;box-shadow:0 0 4px rgba(30,35,60,.25);"></div>
<svg class="b" style="left:2430px;top:1396.5px;" width="27" height="27" viewBox="0 0 30 30"><path d="M8.5 22.500A9.5 9.5 0 0 1 11.5 6.5" fill="none" stroke="#2a2d36" stroke-width="2.2" stroke-linecap="round"/><path d="M7 5.500L12.5 6L11.5 11.5" fill="none" stroke="#2a2d36" stroke-width="2.2" stroke-linecap="round" stroke-linejoin="round"/><path d="M21.5 7.500A9.5 9.5 0 0 1 18.5 23.5" fill="none" stroke="#2a2d36" stroke-width="2.2" stroke-linecap="round"/><path d="M23 24.500L17.5 24L18.5 18.5" fill="none" stroke="#2a2d36" stroke-width="2.2" stroke-linecap="round" stroke-linejoin="round"/></svg>
<svg class="b" style="left:2502.5px;top:1397px;" width="26" height="26" viewBox="0 0 30 30"><path d="M15 3V27M3 15H27" stroke="#2a2d36" stroke-width="2.2" stroke-linecap="round"/><path d="M11.5 6L15 2.500L18.5 6M11.5 24L15 27.500L18.5 24M6 11.500L2.5 15L6 18.500M24 11.500L27.5 15L24 18.5" fill="none" stroke="#2a2d36" stroke-width="2.2" stroke-linecap="round" stroke-linejoin="round"/></svg>
<div class="b" style="left:3811.5px;top:1292px;width:80.0px;height:80px;background:#fff;border-radius:40px;box-shadow:0 3px 14px rgba(30,35,60,.16);"></div>
<svg class="b" style="left:3829px;top:1310px;" width="46" height="44" viewBox="0 0 46 44"><path d="M22 5.500Q6 5.5 6 19.500Q6 29 14 32.500L16 39.500L21.5 34Q39 34 39 20" fill="none" stroke="#1e2128" stroke-width="2.8" stroke-linecap="round" stroke-linejoin="round"/><path d="M35 3V15M29 9H41" stroke="#1e2128" stroke-width="2.8" stroke-linecap="round"/></svg>
<svg class="b" style="left:3960px;top:2084.5px;" width="89" height="89" viewBox="0 0 89 89"><defs><linearGradient id="mg" x1="0.1" y1="0.1" x2="0.9" y2="0.9"><stop offset="0" stop-color="#45b8d0"/><stop offset=".55" stop-color="#5a78dc"/><stop offset="1" stop-color="#8b52e0"/></linearGradient><linearGradient id="ms" x1="0" y1="0" x2="1" y2="1"><stop offset="0" stop-color="#3f8fd8"/><stop offset="1" stop-color="#5a5fd6"/></linearGradient></defs><circle cx="44.5" cy="44.5" r="43.5" fill="#fff" opacity=".55"/><circle cx="44.5" cy="44.5" r="41.8" fill="#fff" stroke="url(#mg)" stroke-width="2.4"/><path d="M45.4 31.400Q47 44.3 59.9 45.900Q47 47.5 45.4 60.400Q43.8 47.5 30.9 45.900Q43.8 44.3 45.4 31.400Z" fill="url(#ms)"/><path d="M32 24Q32.9 30.6 39.5 31.500Q32.9 32.4 32 39Q31.1 32.4 24.5 31.500Q31.1 30.6 32 24Z" fill="#3a93b8"/><path d="M58.8 27Q59.3 31 63.3 31.500Q59.3 32 58.8 36Q58.3 32 54.3 31.500Q58.3 31 58.8 27Z" fill="#4d7fd6"/><path d="M32 52.500Q32.5 56.5 36.5 57Q32.5 57.5 32 61.500Q31.5 57.5 27.5 57Q31.5 56.5 32 52.500Z" fill="#5a6ad8"/></svg>
<svg class="b" style="left:3970px;top:2176px;" width="80" height="80" viewBox="0 0 80 80"><defs><linearGradient id="kr" x1="0" y1="0" x2="0.25" y2="1"><stop offset="0" stop-color="#e4685c"/><stop offset=".25" stop-color="#d9554b"/><stop offset="1" stop-color="#c9463e"/></linearGradient><linearGradient id="kg" x1="0" y1="0" x2="0" y2="1"><stop offset="0" stop-color="#a8a19b"/><stop offset="1" stop-color="#7d7670"/></linearGradient><clipPath id="kc"><rect width="80" height="80"/></clipPath></defs><g clip-path="url(#kc)"><rect width="80" height="80" fill="#3d3736"/><path d="M1 0H32L37 21L9 31Z" fill="url(#kg)"/><path d="M9 31L37 21L38 25L11 35Z" fill="#5b5451"/><path d="M36 0H70L82 11L46 22Z" fill="url(#kg)"/><path d="M46 22L82 11V16L47 26Z" fill="#5b5451"/><path d="M-1 42L74 21.400L82 28V44L8.4 65L-1 55Z" fill="url(#kr)"/><path d="M8.4 65L82 44V51L10 72Z" fill="#a9382f"/><path d="M-1 69L33 63L43 82H-1Z" fill="#8f8882"/><path d="M40 62.600L82 50V82H51Z" fill="url(#kg)"/><path d="M14 9L19 19" stroke="#f4f1ec" stroke-width="1.8" stroke-linecap="round"/></g></svg>
<div class="t " style="left:3994.8px;top:2211.7px;font-size:9.6px;line-height:11.5px;color:#fff;transform:rotate(-15deg);">WebPro</div>
<div class="t " style="left:4029.0px;top:2242.0px;font-size:7.5px;line-height:9.0px;color:#f0ede8;transform:rotate(-16deg);">ctrl</div>
</body></html>
